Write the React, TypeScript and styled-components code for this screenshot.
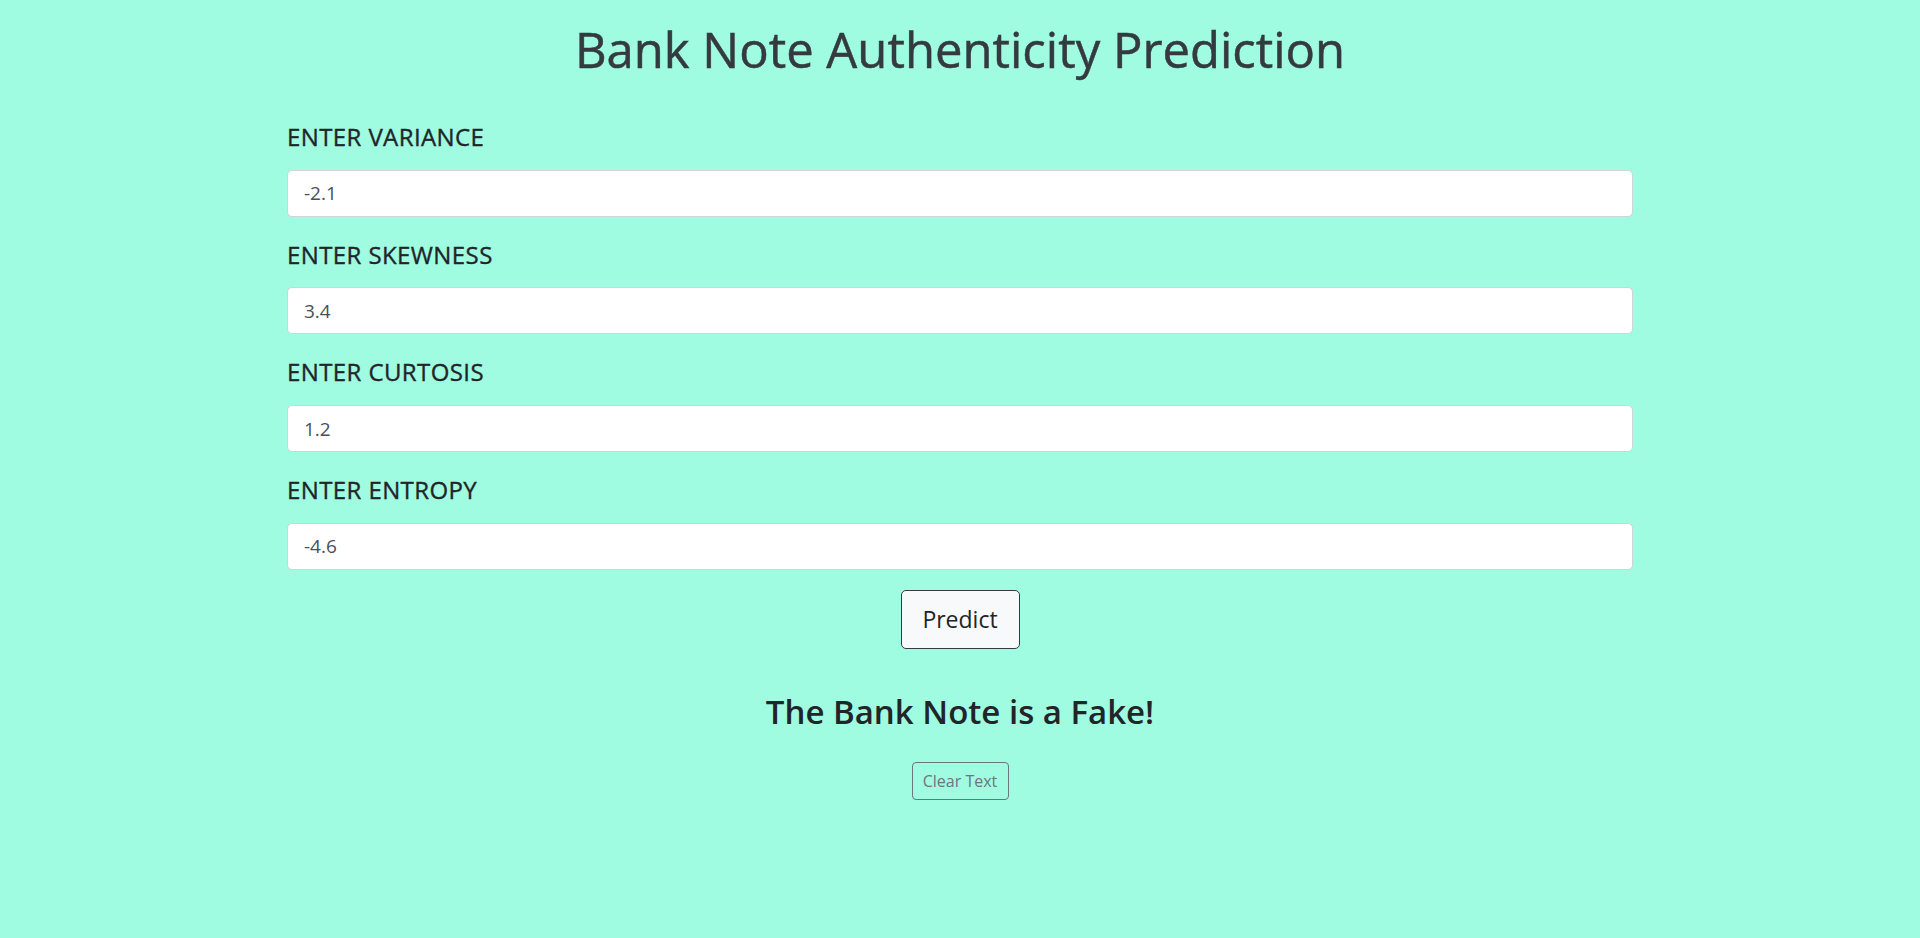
import React from 'react';
import styled, { createGlobalStyle } from 'styled-components';

const GlobalStyle = createGlobalStyle`
  html, body { margin: 0; padding: 0; background: #9ffce0; }
  body { font-family: "Open Sans", "Noto Sans", sans-serif; }
  * { box-sizing: border-box; }
`;

const Page = styled.main`
  min-height: 938px;
  display: flex;
  flex-direction: column;
  align-items: center;
  padding-top: 20px;
`;

const Title = styled.h1`
  margin: 0;
  font-size: 49px;
  font-weight: 400;
  line-height: 1.2;
  color: #343a40;
  -webkit-text-stroke: 0.5px #343a40;
`;

const Form = styled.form`
  width: 1346px;
  margin-top: 40px;
  display: flex;
  flex-direction: column;
  align-items: stretch;
`;

const Field = styled.div`
  display: flex;
  flex-direction: column;
  margin-bottom: 20px;
`;

const Label = styled.label`
  padding-top: 4px;
  font-size: 24px;
  font-weight: 400;
  letter-spacing: 0.4px;
  line-height: 1.2;
  color: #212529;
  -webkit-text-stroke: 0.35px #212529;
  margin-bottom: 18px;
`;

const Input = styled.input`
  height: 47px;
  padding: 8px 16px;
  font-family: inherit;
  font-size: 19px;
  line-height: 1.5;
  color: #495057;
  background: #fff;
  border: 1px solid #ced4da;
  border-radius: 5px;
  outline: none;
`;

const PredictButton = styled.button`
  align-self: center;
  width: 119px;
  height: 59px;
  padding: 0;
  font-family: inherit;
  font-size: 23px;
  color: #212529;
  background: #f8f9fa;
  border: 1px solid #343a40;
  border-radius: 5px;
  cursor: pointer;
`;

const Result = styled.h2`
  margin: 43px 0 0;
  font-size: 33px;
  font-weight: 600;
  line-height: 1.2;
  color: #212529;
`;

const ClearButton = styled.button`
  margin-top: 30px;
  width: 97px;
  height: 38px;
  padding: 0;
  font-family: inherit;
  font-size: 16px;
  color: #6c757d;
  background: transparent;
  border: 1px solid #6c757d;
  border-radius: 4px;
  cursor: pointer;
`;

const fields = [
  { label: 'ENTER VARIANCE', value: '-2.1' },
  { label: 'ENTER SKEWNESS', value: '3.4' },
  { label: 'ENTER CURTOSIS', value: '1.2' },
  { label: 'ENTER ENTROPY', value: '-4.6' },
];

export default function App() {
  return (
    <>
      <GlobalStyle />
      <Page>
        <Title>Bank Note Authenticity Prediction</Title>
        <Form onSubmit={(e) => e.preventDefault()}>
          {fields.map((f) => (
            <Field key={f.label}>
              <Label>{f.label}</Label>
              <Input type="text" defaultValue={f.value} />
            </Field>
          ))}
          <PredictButton type="submit">Predict</PredictButton>
        </Form>
        <Result>The Bank Note is a Fake!</Result>
        <ClearButton type="button">Clear Text</ClearButton>
      </Page>
    </>
  );
}
